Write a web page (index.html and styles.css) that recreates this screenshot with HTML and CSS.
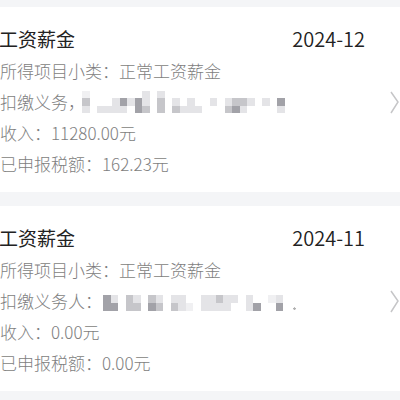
FILE: index.html
```html
<!DOCTYPE html>
<html lang="zh">
<head>
<meta charset="utf-8">
<link rel="stylesheet" href="styles.css">
</head>
<body>
<div class="list">
  <div class="card">
    <div class="main">
      <div class="head"><span class="title">工资薪金</span><span class="date">2024-12</span></div>
      <div class="line">所得项目小类：正常工资薪金</div>
      <div class="line">扣缴义务，<span class="mosaic m1">
        <i class="s0"></i><i></i><i></i><i></i><i></i><i></i><i></i><i></i><i class="s1"></i><i></i><i class="s1"></i><i></i><i></i><i></i><i></i><i></i><i></i><i></i><i></i><i></i><i></i><i></i><i></i><i></i><i></i><i></i><i></i><i></i>
        <i class="s2"></i><i></i><i></i><i></i><i class="s1"></i><i class="s3"></i><i class="s1"></i><i class="s3"></i><i class="s1"></i><i></i><i class="s2"></i><i></i><i class="s1"></i><i></i><i class="s1"></i><i></i><i></i><i class="s1"></i><i></i><i class="s1"></i><i class="s2"></i><i class="s2"></i><i class="s1"></i><i></i><i class="s1"></i><i></i><i class="s3"></i><i></i>
        <i class="s1"></i><i></i><i class="s1"></i><i class="s1"></i><i class="s1"></i><i class="s1"></i><i></i><i class="s3"></i><i class="s2"></i><i></i><i class="s2"></i><i></i><i class="s2"></i><i class="s1"></i><i class="s1"></i><i class="s1"></i><i></i><i></i><i></i><i class="s2"></i><i class="s3"></i><i class="s1"></i><i></i><i></i><i></i><i></i><i class="s1"></i><i></i>
      </span></div>
      <div class="line">收入：11280.00元</div>
      <div class="line">已申报税额：162.23元</div>
    </div>
    <svg class="chev" width="12" height="24" viewBox="0 0 12 24"><path d="M3 2 L10 12 L3 23" fill="none" stroke="#c6c6c8" stroke-width="1.5"/></svg>
  </div>
  <div class="card">
    <div class="main">
      <div class="head"><span class="title">工资薪金</span><span class="date">2024-11</span></div>
      <div class="line">所得项目小类：正常工资薪金</div>
      <div class="line">扣缴义务人：<span class="mosaic m2">
        <i class="s3"></i><i class="s1"></i><i></i><i class="s2"></i><i class="s1"></i><i></i><i class="s2"></i><i class="s1"></i><i></i><i class="s1"></i><i class="s1"></i><i></i><i></i><i class="s1"></i><i class="s1"></i><i class="s2"></i><i class="s1"></i><i class="s1"></i><i></i><i class="s1"></i><i></i><i></i><i class="s0"></i><i class="s1"></i><i></i><i></i>
        <i class="s3"></i><i class="s3"></i><i></i><i class="s2"></i><i class="s2"></i><i></i><i class="s3"></i><i class="s2"></i><i></i><i class="s2"></i><i class="s1"></i><i class="s0"></i><i></i><i class="s1"></i><i class="s1"></i><i class="s1"></i><i class="s1"></i><i></i><i></i><i class="s1"></i><i class="s3"></i><i></i><i></i><i class="s3"></i><i></i><i class="dot"></i>
      </span></div>
      <div class="line">收入：0.00元</div>
      <div class="line">已申报税额：0.00元</div>
    </div>
    <svg class="chev" width="12" height="24" viewBox="0 0 12 24"><path d="M3 2 L10 12 L3 23" fill="none" stroke="#c6c6c8" stroke-width="1.5"/></svg>
  </div>
</div>
</body>
</html>
```

FILE: styles.css
```css
html, body {
  margin: 0;
  padding: 0;
  background: #f4f5f7;
  font-family: "Noto Sans CJK SC", "Noto Sans", sans-serif;
}
.list {
  padding-top: 7px;
  display: flex;
  flex-direction: column;
  gap: 14px;
}
.card {
  background: #ffffff;
  display: flex;
  align-items: center;
  padding: 18px 0 13.5px 0;
  width: 400px;
  box-sizing: border-box;
  overflow: hidden;
}
.main {
  width: 365px;
  flex: none;
}
.head {
  display: flex;
  justify-content: space-between;
  align-items: center;
  height: 28px;
  margin-bottom: 1.5px;
}
.title {
  font-size: 19px;
  color: #222222;
  margin-left: -1px;
  line-height: 28px;
}
.date {
  font-size: 20px;
  font-weight: 350;
  color: #222222;
  line-height: 28px;
}
.line {
  font-size: 17px;
  font-weight: 300;
  color: #7e7e80;
  line-height: 31px;
  height: 31px;
  white-space: nowrap;
}
.mosaic {
  display: inline-grid;
  vertical-align: middle;
}
.m1 {
  grid-template-columns: repeat(28, 7.5px);
  grid-template-rows: repeat(3, 7.5px);
  margin-left: -3px;
  position: relative;
  top: -2px;
}
.m2 {
  grid-template-columns: repeat(26, 7.5px);
  grid-template-rows: repeat(2, 8px);
  margin-left: 1px;
}
.mosaic i {
  display: block;
}
.mosaic i.s0 { background: #f0f0f2; }
.mosaic i.s1 { background: #e4e4e7; }
.mosaic i.s2 { background: #c6c6ca; }
.mosaic i.s3 { background: #a2a2a8; }
.mosaic i.dot {
  background: radial-gradient(circle at 50% 70%, #b0b0b0 1px, transparent 1.5px);
}
.chev {
  flex: none;
  margin-left: 23px;
  margin-top: 1px;
}
```
